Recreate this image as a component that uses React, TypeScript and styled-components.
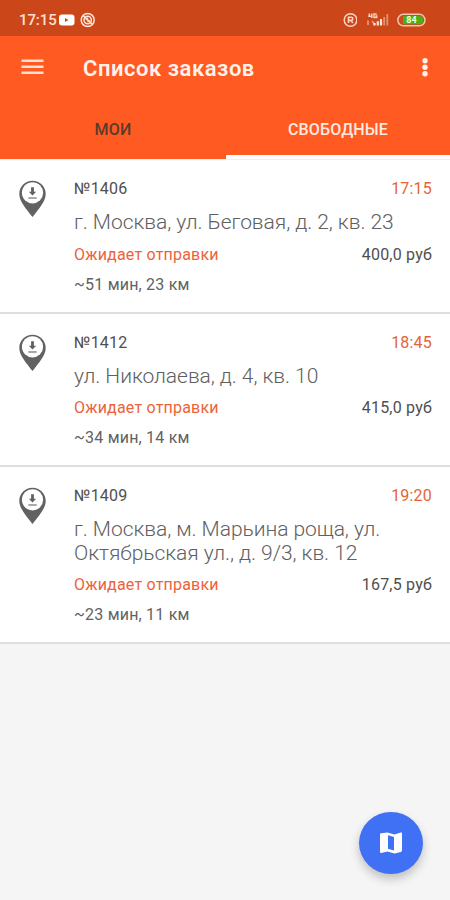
import React from "react";
import styled, { createGlobalStyle } from "styled-components";

const Global = createGlobalStyle`
  * { box-sizing: border-box; }
  body { margin: 0; background: #f5f5f5; font-family: Roboto, sans-serif; }
`;

const Screen = styled.div`
  position: relative;
  width: 450px;
  height: 900px;
  display: flex;
  flex-direction: column;
  background: #f5f5f5;
  overflow: hidden;
`;

const StatusBar = styled.div`
  height: 36px;
  flex: none;
  display: flex;
  align-items: center;
  padding: 3px 24px 0 19px;
  background: #cb4618;
  color: #ffe0d2;
`;

const Clock = styled.span`
  width: 39px;
  font-size: 15px;
  line-height: 18px;
  font-weight: 500;
  letter-spacing: -0.1px;
  white-space: nowrap;
`;

const StatusIcons = styled.div`
  margin-left: auto;
  display: flex;
  align-items: center;
  gap: 8px;
`;

const Toolbar = styled.header`
  height: 64px;
  flex: none;
  display: flex;
  align-items: center;
  padding: 0 20px 0 21px;
  background: #ff5a22;
  color: #fff1eb;
`;

const Title = styled.h1`
  margin: 1px auto 0 39px;
  font-size: 22px;
  line-height: 28px;
  font-weight: 600;
  letter-spacing: 0.53px;
`;

const IconButton = styled.button`
  display: flex;
  padding: 0;
  border: 0;
  background: none;
  color: inherit;
`;

const Tabs = styled.nav`
  height: 60px;
  flex: none;
  display: grid;
  grid-template-columns: 226px 224px;
  background: #ff5a22;
  border-bottom: 1px solid #f5eeeb;
`;

const Tab = styled.button<{ $active?: boolean }>`
  padding: 5px 0 0;
  border: 0;
  border-bottom: 4px solid ${(p) => (p.$active ? "#fff" : "transparent")};
  background: none;
  color: ${(p) => (p.$active ? "#ffe9e0" : "#5c3a2c")};
  font: 500 16px/20px Roboto, sans-serif;
  letter-spacing: 0.15px;
`;

const Order = styled.article`
  display: grid;
  grid-template-columns: 74px 1fr;
  flex: none;
  padding: 19px 18px 17px 0;
  background: #fff;
  border-bottom: 2px solid #dedede;
  align-items: start;
`;

const PinCell = styled.div`
  padding: 1px 0 0 19px;
`;

const Line = styled.div`
  display: flex;
  justify-content: space-between;
  font-size: 16px;
  line-height: 20px;
  letter-spacing: 0.2px;
`;

const Label = styled.span<{ $tone: "dark" | "muted" | "accent" | "time" }>`
  color: ${(p) => ({ dark: "#4f4f4f", muted: "#626262", accent: "#ec6339", time: "#e36436" })[p.$tone]};
`;

const Address = styled.p`
  margin: 12px 0 10px;
  color: #606060;
  font-size: 21px;
  line-height: 23.5px;
  font-weight: 300;
  letter-spacing: -0.05px;
  white-space: pre-line;
`;

const Trip = styled(Line)`
  margin-top: 10px;
`;

const Fab = styled.button`
  position: absolute;
  right: 27px;
  bottom: 26px;
  width: 64px;
  height: 62px;
  display: flex;
  align-items: center;
  justify-content: center;
  padding: 0;
  border: 0;
  border-radius: 50%;
  background: #4070f4;
  box-shadow: 0 5px 10px rgba(0, 0, 0, 0.22);
`;

const Digits = styled.text`
  font: 700 9px Roboto, sans-serif;
`;

const PinIcon = () => (
  <svg width="28" height="38" viewBox="0 0 28 38">
    <path d="M13.5.7C6.2.7.3 6.500.3 13.700c0 8 6.600 14.500 13.200 23.400 6.600-8.900 13.200-15.400 13.200-23.400C26.700 6.500 20.800.7 13.500.7Z" fill="#626262" />
    <circle cx="13.500" cy="12.800" r="10.600" fill="#fff" />
    <path d="M12.100 7.300h2.800v4.400h2.300l-3.700 3.900-3.700-3.900h2.300Z" fill="#606060" />
    <path d="M9.300 18h8.400" stroke="#858585" strokeWidth="1.400" />
  </svg>
);

const orders = [
  { id: "№1406", time: "17:15", address: "г. Москва, ул. Беговая, д. 2, кв. 23", price: "400,0 руб", trip: "~51 мин, 23 км" },
  { id: "№1412", time: "18:45", address: "ул. Николаева, д. 4, кв. 10", price: "415,0 руб", trip: "~34 мин, 14 км" },
  { id: "№1409", time: "19:20", address: "г. Москва, м. Марьина роща, ул.\nОктябрьская ул., д. 9/3, кв. 12", price: "167,5 руб", trip: "~23 мин, 11 км" },
];

export default function App() {
  return (
    <Screen>
      <Global />
      <StatusBar>
        <Clock>17:15</Clock>
        <svg width="40" height="16" viewBox="0 0 40 16">
          <rect x="1" y="2.500" width="15.500" height="11" rx="3" fill="#fff" />
          <path d="M7 6 10.500 8 7 10Z" fill="#cb4618" />
          <g fill="none" stroke="#ffe4d7">
            <circle cx="29.700" cy="8" r="6.500" strokeWidth="1.500" />
            <circle cx="29.700" cy="8" r="3.700" strokeWidth="1.500" />
            <path d="m25.500 4 8.500 8" strokeWidth="1.700" />
            <path d="m28 8 2-2.300M29.500 10l2-2" strokeWidth="1.200" />
          </g>
        </svg>
        <StatusIcons>
          <svg width="16" height="16" viewBox="-2 0 16 16" fill="none" stroke="#ffd3c0">
            <circle cx="7.500" cy="8" r="6.300" strokeWidth="1.500" />
            <path d="M5.500 11V5.200h2.700a1.600 1.600 0 0 1 0 3.200H5.500m2.500 0L9.800 11" strokeWidth="1.600" />
          </svg>
          <svg width="24" height="16" viewBox="-3 0 24 16">
            <path d="M1.500 1.500 1 4.300H4M3.800 1.500V6M8.700 2H6v3.500h2.700V4H7.500" fill="none" stroke="#f3cfbf" strokeWidth="1.500" />
            <path d="M0 8.500v4.500M4 9l2.500 3" stroke="#e8a78e" strokeWidth="1.500" />
            <path d="M6.500 13.500v-2.500M9.800 13.500V9.300M13 13.500V7" stroke="#ffe6dc" strokeWidth="2.200" />
            <path d="M16.200 13.500V5M19.300 13.500V2" stroke="#e39373" strokeWidth="1.800" />
          </svg>
          <svg width="29" height="16" viewBox="0 0 29 16">
            <rect x=".9" y="2.300" width="27" height="11.500" rx="5.500" fill="#c94b20" stroke="#f3c5ab" strokeWidth="1.500" />
            <path d="M6 4h17a3.500 3.500 0 0 1 3 4 3.500 3.500 0 0 1-3 4.200H6Z" fill="#4baf16" />
            <Digits x="14.500" y="11.300" textAnchor="middle" fill="#efffe1">84</Digits>
          </svg>
        </StatusIcons>
      </StatusBar>
      <Toolbar>
        <IconButton aria-label="Меню">
          <svg width="23" height="24" viewBox="0 0 23 24">
            <path d="M.5 4.800h22M.5 10.800h22M.5 16.800h22" stroke="#ffe0d3" strokeWidth="2.500" />
          </svg>
        </IconButton>
        <Title>Список заказов</Title>
        <IconButton aria-label="Ещё">
          <svg width="10" height="24" viewBox="0 0 10 24" fill="#fff2ed">
            <circle cx="5" cy="4.700" r="2.700" />
            <circle cx="5" cy="11.200" r="2.700" />
            <circle cx="5" cy="17.700" r="2.700" />
          </svg>
        </IconButton>
      </Toolbar>
      <Tabs>
        <Tab>МОИ</Tab>
        <Tab $active>СВОБОДНЫЕ</Tab>
      </Tabs>
      {orders.map((o) => (
        <Order key={o.id}>
          <PinCell><PinIcon /></PinCell>
          <div>
            <Line>
              <Label $tone="dark">{o.id}</Label>
              <Label $tone="time">{o.time}</Label>
            </Line>
            <Address>{o.address}</Address>
            <Line>
              <Label $tone="accent">Ожидает отправки</Label>
              <Label $tone="dark">{o.price}</Label>
            </Line>
            <Trip><Label $tone="muted">{o.trip}</Label></Trip>
          </div>
        </Order>
      ))}
      <Fab aria-label="Карта">
        <svg width="22" height="22" viewBox="0 0 22 22">
          <path d="M0 2.500Q0 1.300 1.100 1.300L7.500.6l7 2L20.800.6q1.200-.2 1.200 1v17q0 1-1 1.300l-6.500 1.500-7-2L1.200 21Q0 21.200 0 20Z" fill="#fff" />
          <path d="M8 3.300 14 5v13.500L8 16.800Z" fill="#4070f4" />
        </svg>
      </Fab>
    </Screen>
  );
}
